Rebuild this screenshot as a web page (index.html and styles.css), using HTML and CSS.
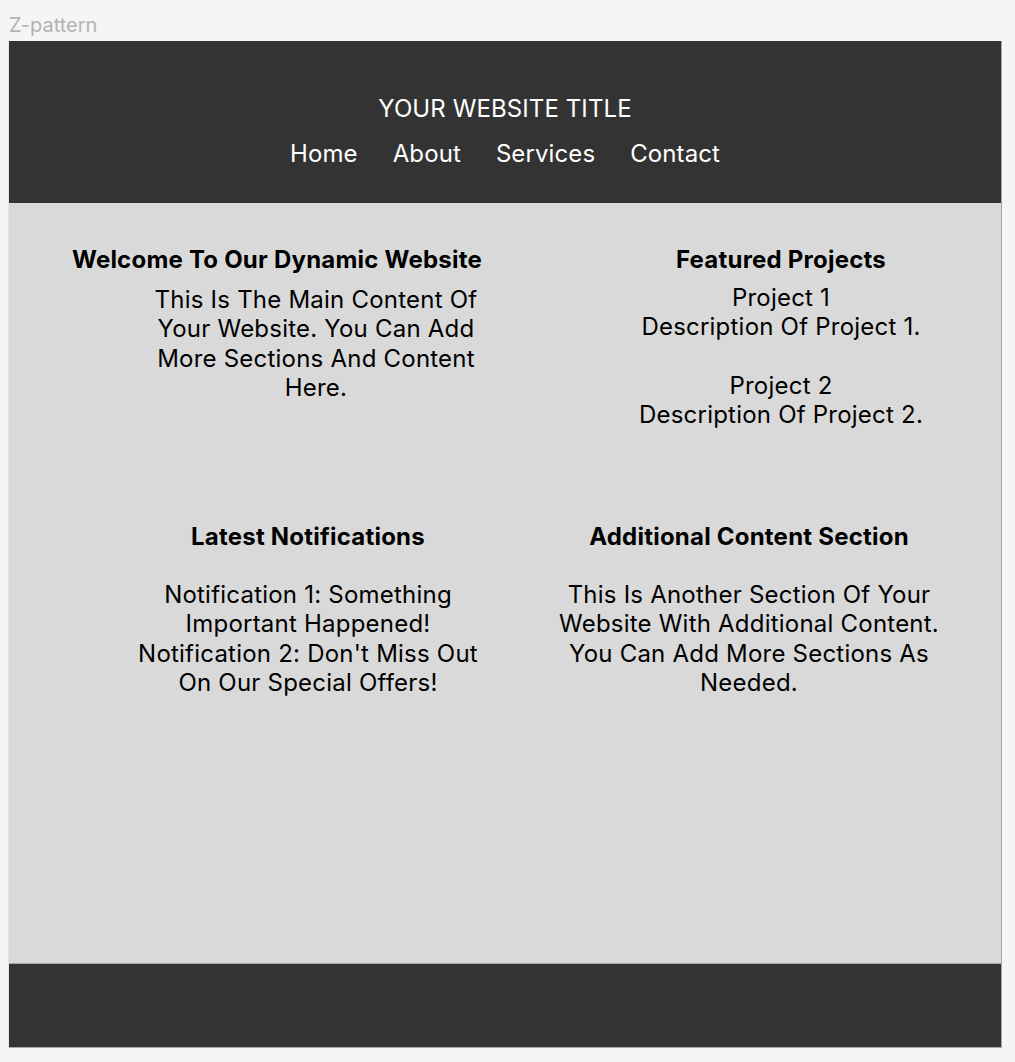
FILE: index.html
```html
<!DOCTYPE html>
<html lang="en">
<head>
<meta charset="utf-8">
<title>Z-pattern</title>
<link rel="stylesheet" href="styles.css">
</head>
<body>
<div class="label">Z-pattern</div>
<div class="frame">
  <header class="header">
    <h1 class="title">YOUR WEBSITE TITLE</h1>
    <nav class="nav">
      <span>Home</span>
      <span>About</span>
      <span>Services</span>
      <span>Contact</span>
    </nav>
  </header>
  <main class="main">
    <section class="block block-welcome">
      <h2 class="heading">Welcome To Our Dynamic Website</h2>
      <p class="text welcome-text">This Is The Main Content Of Your Website. You Can Add More Sections And Content Here.</p>
    </section>
    <section class="block block-projects">
      <h2 class="heading">Featured Projects</h2>
      <div class="text projects-text">
        <div>Project 1</div>
        <div>Description Of Project 1.</div>
        <div class="spacer"></div>
        <div>Project 2</div>
        <div>Description Of Project 2.</div>
      </div>
    </section>
    <section class="block block-notes">
      <h2 class="heading">Latest Notifications</h2>
      <p class="text gap-text">Notification 1: Something Important Happened!<br>Notification 2: Don't Miss Out On Our Special Offers!</p>
    </section>
    <section class="block block-extra">
      <h2 class="heading">Additional Content Section</h2>
      <p class="text gap-text">This Is Another Section Of Your Website With Additional Content. You Can Add More Sections As Needed.</p>
    </section>
  </main>
  <footer class="footer"></footer>
</div>
</body>
</html>
```
FILE: styles.css
```css
* { box-sizing: border-box; }
html, body { margin: 0; padding: 0; }
body {
  background: #f5f5f5;
  font-family: Inter, "Noto Sans", sans-serif;
  color: #000;
}
.label {
  padding: 13px 0 0 9px;
  height: 41px;
  font-size: 20px;
  line-height: 24px;
  color: #b3b3b3;
}
.frame {
  margin-left: 8px;
  width: 994px;
  border-left: 1px solid #e6e6e6;
  border-right: 1px solid #a6a6a6;
}
.header {
  background: #333333;
  height: 162px;
  padding-top: 53px;
  display: flex;
  flex-direction: column;
  align-items: center;
  color: #fff;
}
.title {
  margin: 0;
  font-size: 24px;
  font-weight: 400;
  line-height: 29px;
  letter-spacing: 0.1px;
}
.nav {
  margin-top: 16px;
  display: flex;
  gap: 35px;
  font-size: 24px;
  line-height: 29px;
  letter-spacing: 0.1px;
}
.main {
  background: #d9d9d9;
  height: 761px;
  border-bottom: 1px solid #a6a6a6;
  display: grid;
  grid-template-columns: 496px 496px;
  grid-template-rows: 277px 1fr;
  padding-top: 42px;
}
.block {
  display: flex;
  flex-direction: column;
  align-items: center;
  text-align: center;
}
.heading {
  margin: 0;
  font-size: 24px;
  font-weight: 700;
  line-height: 29px;
  white-space: nowrap;
  letter-spacing: 0.22px;
}
.text {
  margin: 0;
  font-size: 24px;
  line-height: 29.3px;
  letter-spacing: 0.22px;
}
.block-welcome {
  width: 420px;
  margin-left: 58px;
}
.welcome-text {
  width: 336px;
  margin-top: 11px;
  align-self: flex-start;
  margin-left: 81px;
}
.projects-text { margin-top: 9px; }
.spacer { height: 29.3px; }
.block-projects {
  width: 320px;
  margin-left: 116px;
}
.block-notes {
  width: 356px;
  margin-left: 121px;
}
.block-extra {
  width: 396px;
  margin-left: 46px;
}
.gap-text {
  margin-top: 29px;
}
.block-notes .gap-text { width: 356px; }
.block-extra .gap-text { width: 396px; }
.footer {
  background: #333333;
  height: 84px;
  border-bottom: 1px solid #a6a6a6;
}
```
